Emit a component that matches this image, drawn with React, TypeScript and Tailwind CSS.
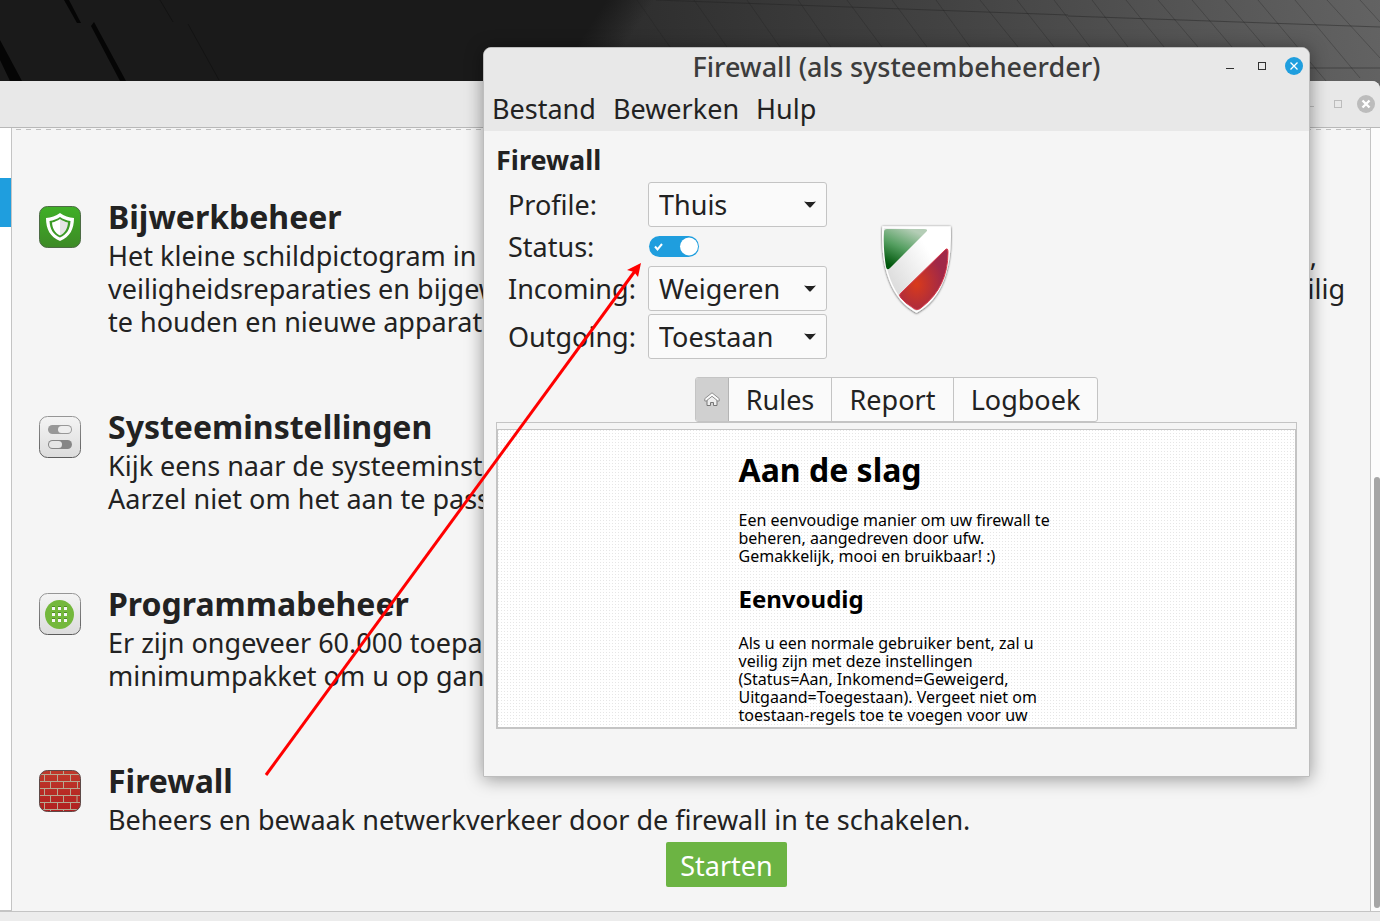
import React from "react";
import { clsx } from "clsx";

interface WelcomeItem {
  title: string;
  icon: React.ReactNode;
  // each line has a left part and, when the line runs to the margin, a right part
  lines: [string, string?][];
  action?: string;
}

const tileClass = "w-[42px] h-[42px] mt-[9px] shrink-0";

const UpdateIcon = () => (
  <svg className={tileClass} viewBox="0 0 42 42" aria-hidden="true">
    <defs>
      <linearGradient id="green" x1="0" y1="0" x2="0" y2="1">
        <stop offset="0" stopColor="#3fb026" />
        <stop offset="1" stopColor="#3d8a26" />
      </linearGradient>
    </defs>
    <rect x="0.5" y="0.5" width="41" height="41" rx="8" fill="url(#green)" stroke="#4d6b45" />
    <path
      d="M21 7C17 10 12 11.500 7 12C7 23 11 31 21 35C31 31 35 23 35 12C30 11.500 25 10 21 7Z"
      fill="#fff"
    />
    <path
      d="M21 11C18 13 14.500 14.500 10.500 15C11 23 14 28.500 21 31.500C28 28.500 31 23 31.500 15C27.500 14.500 24 13 21 11Z"
      fill="#3c9b26"
    />
    <path d="M21 13C18.500 14.700 16 15.800 13 16.500C13.500 22.500 15.700 27 21 29.500Z" fill="#fff" />
    <path d="M21 13C23.500 14.700 26 15.800 29 16.500C28.500 22.500 26.300 27 21 29.500Z" fill="#e4e4e4" />
  </svg>
);

const SettingsIcon = () => (
  <svg className={tileClass} viewBox="0 0 42 42" aria-hidden="true">
    <defs>
      <linearGradient id="grey" x1="0" y1="0" x2="0" y2="1">
        <stop offset="0" stopColor="#f4f4f4" />
        <stop offset="1" stopColor="#dcdcdc" />
      </linearGradient>
      <linearGradient id="edge" x1="0" y1="0" x2="0" y2="1">
        <stop offset="0" stopColor="#969696" />
        <stop offset="1" stopColor="#5c5c5c" />
      </linearGradient>
    </defs>
    <rect x="0.5" y="0.5" width="41" height="41" rx="8" fill="url(#grey)" stroke="url(#edge)" />
    <rect x="9" y="9" width="24" height="9" rx="4.500" fill="#989898" />
    <rect x="19" y="10" width="13" height="7" rx="3.500" fill="#eee" />
    <rect x="9" y="24" width="24" height="9" rx="4.500" fill="#868686" />
    <rect x="10" y="25" width="13" height="7" rx="3.500" fill="#e6e6e6" />
  </svg>
);

const SoftwareIcon = () => (
  <svg className={tileClass} viewBox="0 0 42 42" aria-hidden="true">
    <rect x="0.5" y="0.5" width="41" height="41" rx="8" fill="url(#grey)" stroke="url(#edge)" />
    <circle cx="20.500" cy="21.500" r="14.500" fill="#74b83c" />
    {[13, 19, 25].map((y) =>
      [13, 19, 25].map((x) => (
        <g key={`${x}-${y}`}>
          <rect x={x} y={y} width="3" height="4" fill="#4f8a28" />
          <rect x={x} y={y + 1} width="3" height="3" fill="#f6f6f6" />
        </g>
      ))
    )}
  </svg>
);

const FirewallIcon = () => (
  <svg className={tileClass} viewBox="0 0 42 42" aria-hidden="true">
    <defs>
      <linearGradient id="brick" x1="0" y1="0" x2="0" y2="1">
        <stop offset="0" stopColor="#c0392b" />
        <stop offset="1" stopColor="#b01f1f" />
      </linearGradient>
      <clipPath id="tile">
        <rect x="0.5" y="0.5" width="41" height="41" rx="8" />
      </clipPath>
    </defs>
    <g clipPath="url(#tile)">
      <rect width="42" height="42" fill="url(#brick)" />
      <path
        d="M0 4.500H42M0 11.500H42M0 18.500H42M0 25.500H42M0 32.500H42M0 39.500H42M11.500 0V4M24.500 0V4M5.500 4V11M18.500 4V11M31.500 4V11M11.500 11V18M24.500 11V18M38.500 11V18M5.500 18V25M18.500 18V25M31.500 18V25M11.500 25V32M24.500 25V32M38 25V32M5.500 32V39M18.500 32V39M31.500 32V39M11.500 39V42M24.500 39V42"
        fill="none"
        stroke="#b5a891"
      />
    </g>
    <rect x="0.5" y="0.5" width="41" height="41" rx="8" fill="none" stroke="#5e4a48" />
  </svg>
);

const items: WelcomeItem[] = [
  {
    title: "Bijwerkbeheer",
    icon: <UpdateIcon />,
    lines: [
      ["Het kleine schildpictogram in", ","],
      ["veiligheidsreparaties en bijgew", "ilig"],
      ["te houden en nieuwe apparatu"]
    ]
  },
  {
    title: "Systeeminstellingen",
    icon: <SettingsIcon />,
    lines: [["Kijk eens naar de systeeminste"], ["Aarzel niet om het aan te pass"]]
  },
  {
    title: "Programmabeheer",
    icon: <SoftwareIcon />,
    lines: [["Er zijn ongeveer 60.000 toepa"], ["minimumpakket om u op gang"]]
  },
  {
    title: "Firewall",
    icon: <FirewallIcon />,
    lines: [["Beheers en bewaak netwerkverkeer door de firewall in te schakelen."]],
    action: "Starten"
  }
];

const Wallpaper = () => (
  <svg
    className="absolute inset-x-0 top-0 w-full h-[90px]"
    viewBox="0 0 1380 90"
    preserveAspectRatio="none"
    aria-hidden="true"
  >
    <defs>
      <linearGradient id="floor" gradientUnits="userSpaceOnUse" x1="600" y1="60" x2="1380" y2="-30">
        <stop offset="0" stopColor="#2c2c2c" />
        <stop offset="0.450" stopColor="#434343" />
        <stop offset="1" stopColor="#636363" />
      </linearGradient>
      <linearGradient id="dark" gradientUnits="userSpaceOnUse" x1="596" y1="16" x2="630" y2="38">
        <stop offset="0" stopColor="#1a1a1a" />
        <stop offset="1" stopColor="#1a1a1a" stopOpacity="0" />
      </linearGradient>
    </defs>
    <rect width="1380" height="90" fill="url(#floor)" />
    <path
      d="M637 0L670 47M694 0L727 47M747 0L780 47M798 0L831 47M847 0L882 47M892 0L927 47M936 0L970 47M980 0L1018 47M1017 0L1054 47M1054 0L1090 47M1092 0L1128 47M1126 0L1164 47M1158 0L1198 47M1192 0L1232 47M1225 0L1265 47M1258 0L1326 81M1295 0L1360 78M1327 0L1380 58M1360 0L1380 22"
      stroke="#222"
      strokeOpacity="0.300"
      fill="none"
    />
    <path d="M656 0L1068 15M1068 16L1380 27M1310 68H1380" stroke="#222" strokeOpacity="0.450" fill="none" />
    <rect width="1380" height="90" fill="url(#dark)" />
    <path d="M64 0H69L81 23H77ZM91 26L94 22L126 81H120ZM0 40L22 81H10L0 60Z" fill="#050505" />
    <path d="M160 0L173 22M188 24L219 80" stroke="#131313" />
  </svg>
);

const WindowButtons = ({ active }: { active?: boolean }) => (
  <div className={clsx("flex", active ? "gap-[14px] text-[#303030]" : "gap-[10px] text-[#bcbcbc]")}>
    <button type="button" aria-label="Minimaliseren" className="w-[18px] h-[18px]">
      <svg viewBox="0 0 18 18" aria-hidden="true">
        <path d="M5 11.500H13" stroke="currentColor" />
      </svg>
    </button>
    <button type="button" aria-label="Maximaliseren" className="w-[18px] h-[18px]">
      <svg viewBox="0 0 18 18" aria-hidden="true">
        <rect x="5.500" y="5.500" width="7" height="7" fill="none" stroke="currentColor" />
      </svg>
    </button>
    <button
      type="button"
      aria-label="Sluiten"
      className={clsx("w-[18px] h-[18px] rounded-full", active ? "bg-[#1f9ede]" : "bg-[#bcbcbc]")}
    >
      <svg viewBox="0 0 18 18" aria-hidden="true">
        <path d="M5.500 5.500L12.500 12.500M12.500 5.500L5.500 12.500" stroke="#fff" strokeWidth={active ? 1.3 : 2.4} />
      </svg>
    </button>
  </div>
);

const WelcomeWindow = () => (
  <section className="relative flex-1 flex flex-col bg-[#ececec] rounded-tr-lg overflow-hidden">
    <header className="h-[47px] shrink-0 flex items-center justify-end pr-[5px] bg-[#e8e8e8] border-b border-[#b8b8b8]">
      <WindowButtons />
    </header>
    <div className="flex-1 flex">
      <nav className="w-3 shrink-0 bg-white border-r border-b border-[#c4c4c4]">
        <div className="mt-[50px] h-[49px] bg-[#1f9ede]" />
      </nav>
      <main className="flex-1 bg-[#f5f5f5]">
        <div className="mt-px ml-1 h-px bg-[repeating-linear-gradient(90deg,#c0c0c0_0_5px,transparent_5px_10px)]" />
        <div className="pt-[67px] pl-[27px] pr-[25px] flex flex-col gap-[69px]">
          {items.map((item) => (
            <article key={item.title} className="flex gap-[27px]">
              {item.icon}
              <div className="flex-1">
                <h2 className="h-[42px] leading-[40px] text-[32px] font-bold">{item.title}</h2>
                {item.lines.map(([left, right]) => (
                  <p key={left} className="flex justify-between leading-[33px] text-[27px] whitespace-nowrap">
                    <span>{left}</span>
                    {right && <span className={right === "," ? "pr-[28px]" : ""}>{right}</span>}
                  </p>
                ))}
                {item.action && (
                  <button
                    type="button"
                    className="block mx-auto mt-[6px] pt-[2px] w-[121px] h-[45px] rounded-xs bg-[#6cb443] text-white text-[27px] leading-[33px]"
                  >
                    {item.action}
                  </button>
                )}
              </div>
            </article>
          ))}
        </div>
      </main>
      <div className="w-[10px] shrink-0 pl-[3px] bg-[#fcfcfc] border-l border-[#c4c4c4]">
        <div className="mt-[349px] h-[431px] rounded-full bg-[#a6a6a6]" />
      </div>
    </div>
    <footer className="h-[10px] shrink-0 border-t border-[#c4c4c4]" />
  </section>
);

const PolicySelect = ({ id, label, value }: { id: string; label: string; value: string }) => (
  <>
    <label htmlFor={id}>{label}</label>
    <div className="relative">
      <select
        id={id}
        defaultValue={value}
        className="w-[179px] h-[45px] pl-[10px] leading-[40px] appearance-none rounded-[3px] border border-[#c4c4c4] bg-[#fafafa]"
      >
        <option>{value}</option>
      </select>
      <svg
        className="absolute right-[11px] top-[19px] w-3 h-2 pointer-events-none"
        viewBox="0 0 12 8"
        aria-hidden="true"
      >
        <path d="M0 0.500Q6 1.500 12 0.500L7 6Q6 7 5 6Z" fill="#222" />
      </svg>
    </div>
  </>
);

const Shield = () => (
  <svg className="w-[78px] h-[96px]" viewBox="0 0 78 96" aria-hidden="true">
    <defs>
      <linearGradient id="shieldGreen" x1="0.600" y1="0" x2="0.150" y2="0.900">
        <stop offset="0" stopColor="#b4cdb6" />
        <stop offset="0.500" stopColor="#559f61" />
        <stop offset="1" stopColor="#00570c" />
      </linearGradient>
      <radialGradient id="shieldRed" cx="0.350" cy="0.580" r="0.550">
        <stop offset="0" stopColor="#d93a1b" />
        <stop offset="1" stopColor="#a02848" />
      </radialGradient>
      <linearGradient id="shieldWhite" x1="0.700" y1="0.300" x2="0.200" y2="0.700">
        <stop offset="0" stopColor="#fff" />
        <stop offset="1" stopColor="#dedede" />
      </linearGradient>
      <filter id="soft" x="-20%" y="-20%" width="140%" height="140%">
        <feDropShadow dx="0" dy="0.500" stdDeviation="1.300" floodOpacity="0.750" />
      </filter>
    </defs>
    <path
      d="M5 4H72C74 45 63 76 38.500 89C14 76 3 45 5 4Z"
      fill="url(#shieldWhite)"
      stroke="#fff"
      strokeWidth="1.500"
      filter="url(#soft)"
    />
    <path d="M9 6H46Q51 6 48 9L12 45Q9 48 8 44Q5 25 6 9Q6 6 9 6Z" fill="url(#shieldGreen)" />
    <path
      d="M23 70L67 27Q70 24 70 29Q70 64 44 84Q39 89 34 84Q27 80 23 75Q20 72 23 70Z"
      fill="url(#shieldRed)"
      stroke="#d8384a"
    />
  </svg>
);

const HomeIcon = () => (
  <svg className="w-4 h-4" viewBox="0 0 16 16" aria-hidden="true">
    <path d="M3 7.500V13.500H6.500V10.500H9.500V13.500H13V7.500L8 3.500Z" fill="#eee" stroke="#777" />
    <path
      d="M8 0.800L0.800 6.600V9L2.200 9L8 4.300L13.800 9H15.200V6.600Z"
      fill="#fafafa"
      stroke="#858585"
      strokeWidth="0.900"
      strokeLinejoin="round"
    />
  </svg>
);

const tabs = [
  { label: "Rules", width: "w-[103px]" },
  { label: "Report", width: "w-[122px]" },
  { label: "Logboek", width: "w-[143px]" }
];

const FirewallWindow = () => (
  <section className="absolute left-[483px] top-[47px] w-[827px] h-[730px] flex flex-col rounded-t-lg border border-[#bdbdbd] bg-[#f5f5f5] overflow-hidden text-[27px]">
    <header className="bg-[#e8e8e8]">
      <div className="relative h-9 flex items-center justify-center">
        <h1 className="pt-[2px] text-[27px] font-medium leading-9 text-[#3c3c3c]">Firewall (als systeembeheerder)</h1>
        <div className="absolute right-[6px] top-[9px]">
          <WindowButtons active />
        </div>
      </div>
      <nav className="h-[47px] px-2 pt-1 flex items-center gap-[17px]">
        <button type="button">Bestand</button>
        <button type="button">Bewerken</button>
        <button type="button">Hulp</button>
      </nav>
    </header>
    <div className="flex-1 min-h-0 flex flex-col px-3 pt-3 pb-[47px]">
      <h2 className="h-[39px] leading-[34px] font-bold">Firewall</h2>
      <div className="flex">
        <div className="pl-3 grid grid-cols-[140px_179px] gap-y-[3px] items-center leading-[33px]">
          <PolicySelect id="profile" label="Profile:" value="Thuis" />
          <label htmlFor="status">Status:</label>
          <div className="h-[33px] pl-px flex items-center">
            <span className="relative w-[50px] h-[21px]">
              <input
                id="status"
                type="checkbox"
                role="switch"
                defaultChecked
                className="block w-[50px] h-[21px] appearance-none rounded-full bg-[#1f9ede]"
              />
              <svg className="absolute inset-0 pointer-events-none" viewBox="0 0 50 21" aria-hidden="true">
                <path d="M6 10.500L8.500 13.500L13 8" fill="none" stroke="#fff" strokeWidth="2" />
                <circle cx="40" cy="10.500" r="9" fill="#fff" />
              </svg>
            </span>
          </div>
          <PolicySelect id="incoming" label="Incoming:" value="Weigeren" />
          <PolicySelect id="outgoing" label="Outgoing:" value="Toestaan" />
        </div>
        <div className="w-[179px] flex items-center justify-center">
          <Shield />
        </div>
      </div>
      <div className="mt-[18px] mx-auto flex h-[45px] rounded-[3px] border border-[#c4c4c4] bg-[#fafafa] overflow-hidden">
        <button
          type="button"
          aria-label="Start"
          className="w-[33px] flex items-center justify-center border-r border-[#b4b4b4] bg-[#d0d0d0]"
        >
          <HomeIcon />
        </button>
        {tabs.map((tab) => (
          <button
            key={tab.label}
            type="button"
            className={clsx("pt-[2px] border-r last:border-r-0 border-[#c4c4c4]", tab.width)}
          >
            {tab.label}
          </button>
        ))}
      </div>
      <div className="flex-1 min-h-0 flex flex-col pt-[6px] border border-[#c4c4c4]">
        <div className="flex-1 min-h-0 overflow-hidden border border-[#c4c4c4] bg-white bg-[conic-gradient(at_1px_1px,transparent_75%,#e6e6e6_0)] bg-[length:3px_3px] text-black">
          <div className="w-[316px] mx-auto text-base leading-[18px]">
            <h3 className="mt-[21px] text-[32px] leading-[38px] font-bold">Aan de slag</h3>
            <p className="mt-[22px]">
              Een eenvoudige manier om uw firewall te
              <br />
              beheren, aangedreven door ufw.
              <br />
              Gemakkelijk, mooi en bruikbaar! :)
            </p>
            <h3 className="mt-5 text-2xl leading-[28px] font-bold">Eenvoudig</h3>
            <p className="mt-[21px]">
              Als u een normale gebruiker bent, zal u
              <br />
              veilig zijn met deze instellingen
              <br />
              (Status=Aan, Inkomend=Geweigerd,
              <br />
              Uitgaand=Toegestaan). Vergeet niet om
              <br />
              toestaan-regels toe te voegen voor uw
            </p>
          </div>
        </div>
      </div>
    </div>
  </section>
);

const Arrow = () => (
  <svg className="absolute left-0 top-0 w-[700px] h-[800px] pointer-events-none" viewBox="0 0 700 800" aria-hidden="true">
    <path d="M266 775L635 271" stroke="#f00" strokeWidth="3" />
    <path d="M641 263L638 277L634 272L627 270Z" fill="#f00" />
  </svg>
);

const App = () => {
  return (
    <div className="relative h-screen pt-[81px] flex flex-col overflow-hidden bg-[#1b1b1b] font-['Noto_Sans',sans-serif] text-[#222]">
      <Wallpaper />
      <WelcomeWindow />
      <div className="absolute left-[483px] top-[47px] w-[827px] h-[730px] rounded-t-lg shadow-[0_2px_18px_rgba(0,0,0,0.4)]" />
      <FirewallWindow />
      <Arrow />
    </div>
  );
};

export default App;
